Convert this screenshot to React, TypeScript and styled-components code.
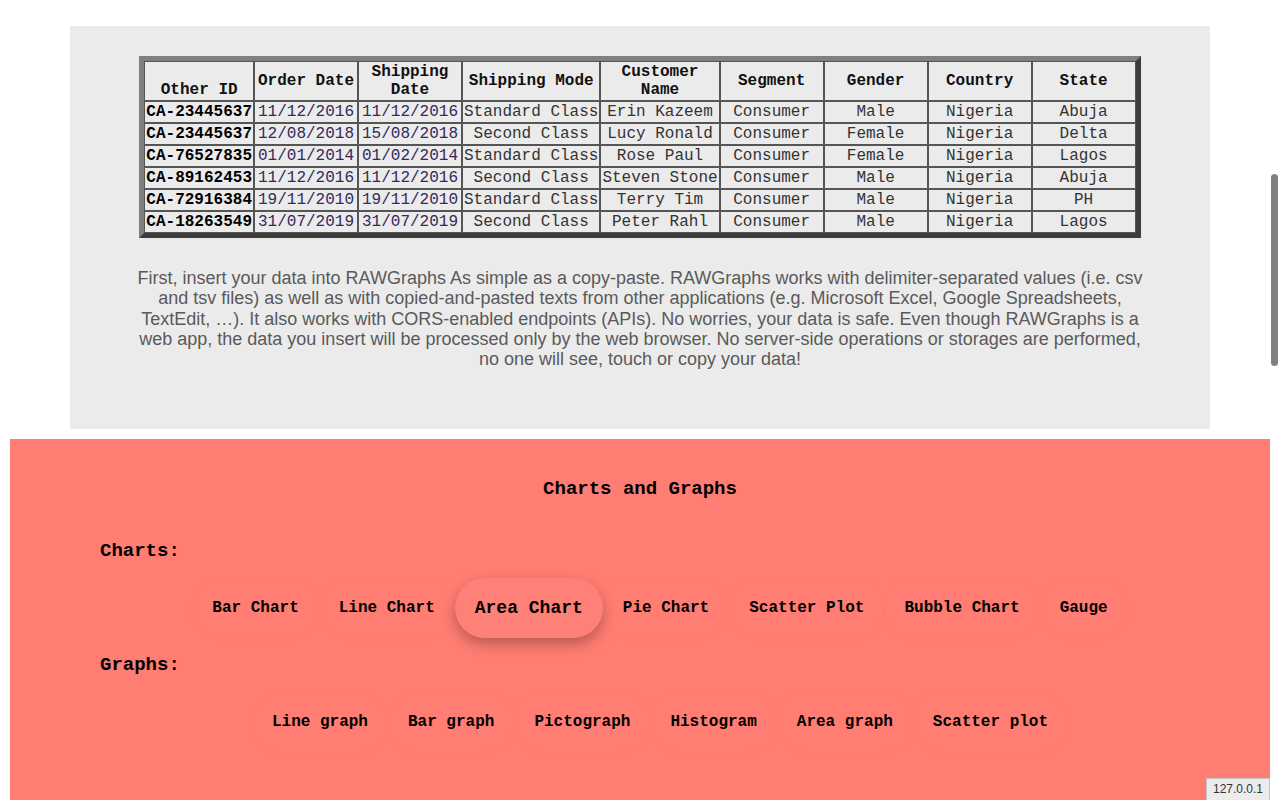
import React from "react";
import styled, { createGlobalStyle } from "styled-components";

const GlobalStyle = createGlobalStyle`
  html, body {
    margin: 0;
    padding: 0;
    background: #fff;
    overflow: hidden;
  }
  body {
    font-family: "Liberation Mono", "Courier New", monospace;
  }
`;

const orders = [
  ["CA-23445637", "11/12/2016", "11/12/2016", "Standard Class", "Erin Kazeem", "Consumer", "Male", "Nigeria", "Abuja"],
  ["CA-23445637", "12/08/2018", "15/08/2018", "Second Class", "Lucy Ronald", "Consumer", "Female", "Nigeria", "Delta"],
  ["CA-76527835", "01/01/2014", "01/02/2014", "Standard Class", "Rose Paul", "Consumer", "Female", "Nigeria", "Lagos"],
  ["CA-89162453", "11/12/2016", "11/12/2016", "Second Class", "Steven Stone", "Consumer", "Male", "Nigeria", "Abuja"],
  ["CA-72916384", "19/11/2010", "19/11/2010", "Standard Class", "Terry Tim", "Consumer", "Male", "Nigeria", "PH"],
  ["CA-18263549", "31/07/2019", "31/07/2019", "Second Class", "Peter Rahl", "Consumer", "Male", "Nigeria", "Lagos"],
];

const headers = [
  "Other ID",
  "Order Date",
  "Shipping Date",
  "Shipping Mode",
  "Customer Name",
  "Segment",
  "Gender",
  "Country",
  "State",
];

// the intro wraps at these points in the original
const introLines = [
  "First, insert your data into RAWGraphs As simple as a copy-paste. RAWGraphs works with delimiter-separated values (i.e. csv",
  "and tsv files) as well as with copied-and-pasted texts from other applications (e.g. Microsoft Excel, Google Spreadsheets,",
  "TextEdit, …). It also works with CORS-enabled endpoints (APIs). No worries, your data is safe. Even though RAWGraphs is a",
  "web app, the data you insert will be processed only by the web browser. No server-side operations or storages are performed,",
  "no one will see, touch or copy your data!",
];

const charts = ["Bar Chart", "Line Chart", "Area Chart", "Pie Chart", "Scatter Plot", "Bubble Chart", "Gauge"];
const graphs = ["Line graph", "Bar graph", "Pictograph", "Histogram", "Area graph", "Scatter plot"];

function App() {
  return (
    <>
      <GlobalStyle />
      <Page>
        <DataPanel>
          <OrdersTable>
            <thead>
              <tr>
                {headers.map((h, i) => (
                  <HeadCell key={h} $bottom={i === 0}>
                    {h}
                  </HeadCell>
                ))}
              </tr>
            </thead>
            <tbody>
              {orders.map((row, r) => (
                <tr key={r}>
                  {row.map((cell, c) => (
                    <Cell key={c} $id={c === 0} $date={c === 1 || c === 2}>
                      {cell}
                    </Cell>
                  ))}
                </tr>
              ))}
            </tbody>
          </OrdersTable>

          <Intro>
            {introLines.map((line, i) => (
              <React.Fragment key={i}>
                {line}
                {i < introLines.length - 1 && <br />}
              </React.Fragment>
            ))}
          </Intro>
        </DataPanel>

        <ChartsSection>
          <Title>Charts and Graphs</Title>

          <GroupLabel>Charts:</GroupLabel>
          <ButtonList>
            {charts.map((c) => (
              <ChartButton key={c} $active={c === "Area Chart"}>
                {c}
              </ChartButton>
            ))}
          </ButtonList>

          <GroupLabel>Graphs:</GroupLabel>
          <ButtonList>
            {graphs.map((g) => (
              <ChartButton key={g}>{g}</ChartButton>
            ))}
          </ButtonList>
        </ChartsSection>
      </Page>

      <Scrollbar />
      <StatusBubble>127.0.0.1</StatusBubble>
    </>
  );
}

const Page = styled.div`
  padding: 26px 10px 0;
`;

const DataPanel = styled.div`
  margin: 0 60px;
  background: #ebebeb;
  padding: 30px 0 60px;
  display: flex;
  flex-direction: column;
  align-items: center;
`;

const OrdersTable = styled.table`
  border-spacing: 0;
  border-style: solid;
  border-width: 5px;
  border-color: #808080 #3c3c3c #3c3c3c #808080;
  background: #ebebeb;
  font-family: "Liberation Mono", "Courier New", monospace;
  font-size: 16px;
`;

const HeadCell = styled.th<{ $bottom?: boolean }>`
  width: 100px;
  padding: 1px;
  border: 1px solid #555;
  font-weight: bold;
  color: #111;
  line-height: 18px;
  text-align: center;
  vertical-align: ${(p) => (p.$bottom ? "bottom" : "middle")};
`;

const Cell = styled.td<{ $id?: boolean; $date?: boolean }>`
  width: 100px;
  padding: 1px;
  border: 1px solid #555;
  line-height: 18px;
  text-align: center;
  white-space: nowrap;
  font-weight: ${(p) => (p.$id ? "bold" : "normal")};
  color: ${(p) => (p.$id ? "#000" : p.$date ? "#33295a" : "#333")};
`;

const Intro = styled.p`
  width: 1060px;
  margin: 30px 0 0;
  font-family: "Liberation Sans", Arial, Helvetica, sans-serif;
  font-size: 18px;
  line-height: 20.3px;
  color: #5a5a5a;
  text-align: center;
  white-space: nowrap;
`;

const ChartsSection = styled.section`
  margin-top: 10px;
  background: #ff7d72;
  padding: 39px 0 80px;
  color: #000;
  display: flex;
  flex-direction: column;
`;

const Title = styled.h3`
  margin: 0 0 24px;
  text-align: center;
  font-size: 19px;
  line-height: 22px;
  font-weight: bold;
`;

const GroupLabel = styled.h3`
  margin: 16px 0 16px 90px;
  font-size: 19px;
  line-height: 22px;
  font-weight: bold;
`;

const ButtonList = styled.ul`
  list-style: none;
  margin: 0;
  padding: 0 0 0 40px;
  display: flex;
  justify-content: center;
`;

const ChartButton = styled.li<{ $active?: boolean }>`
  height: 60px;
  padding: 0 20px;
  display: flex;
  align-items: center;
  border-radius: 30px;
  font-weight: bold;
  font-size: ${(p) => (p.$active ? "18px" : "16px")};
  background: ${(p) => (p.$active ? "#ff8077" : "transparent")};
  box-shadow: ${(p) =>
    p.$active ? "0 6px 14px rgba(0, 0, 0, 0.28)" : "0 1px 4px rgba(0, 0, 0, 0.018)"};
  cursor: pointer;
`;

const Scrollbar = styled.div`
  position: fixed;
  top: 174px;
  right: 2px;
  width: 7px;
  height: 192px;
  border-radius: 4px;
  background: #808080;
`;

const StatusBubble = styled.div`
  position: fixed;
  right: 10px;
  bottom: 0;
  padding: 3px 6px 4px;
  background: #ececec;
  border: 1px solid #c4c4c4;
  border-bottom: none;
  font-family: "Liberation Sans", Arial, sans-serif;
  font-size: 12px;
  color: #333;
`;

export default App;
